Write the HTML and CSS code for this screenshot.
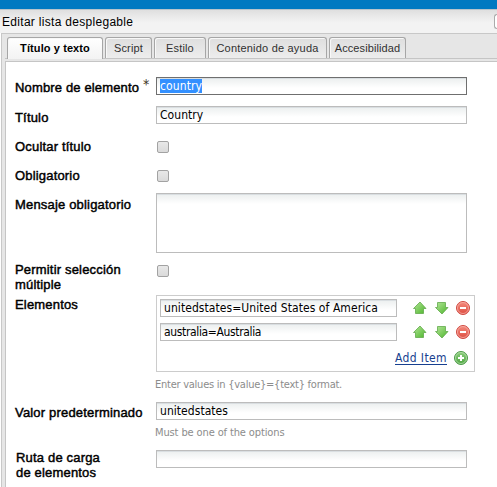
FILE: index.html
```html
<!DOCTYPE html>
<html lang="es">
<head>
<meta charset="utf-8">
<title>Editar lista desplegable</title>
<link rel="stylesheet" href="styles.css">
</head>
<body>
<svg class="defs" width="0" height="0">
  <defs>
    <linearGradient id="green" x1="0" y1="0" x2="1" y2="1"><stop offset="0" stop-color="#b5e69a"/><stop offset="1" stop-color="#4cb52a"/></linearGradient>
    <linearGradient id="disc" x1="0" y1="0" x2="0" y2="1"><stop offset="0" stop-color="#8fcf80"/><stop offset="1" stop-color="#4aa43d"/></linearGradient>
    <linearGradient id="red" x1="0" y1="0" x2="0" y2="1"><stop offset="0" stop-color="#f58d80"/><stop offset="1" stop-color="#dc4a3e"/></linearGradient>
    <symbol id="up" viewBox="0 0 14 14"><path d="M7 1 L13 7.5 H10.5 V12.5 H2.5 V7.5 H.5 Z" fill="url(#green)" stroke="#62a94b" stroke-width=".8"/></symbol>
    <symbol id="down" viewBox="0 0 14 14"><path d="M7 13 L13 6.5 H10.5 V1.5 H2.5 V6.5 H.5 Z" fill="url(#green)" stroke="#62a94b" stroke-width=".8"/></symbol>
    <symbol id="remove" viewBox="0 0 14 14"><circle cx="7" cy="7" r="6.5" fill="url(#red)" stroke="#cf4a42"/><circle cx="7" cy="7" r="5.5" fill="none" stroke="#f6b0a8" stroke-width=".8"/><path d="M4 7H10" stroke="#fff" stroke-width="2"/></symbol>
    <symbol id="add" viewBox="0 0 14 14"><circle cx="7" cy="7" r="6.5" fill="url(#disc)" stroke="#4d9a48"/><circle cx="7" cy="7" r="5.5" fill="none" stroke="#b5deac" stroke-width=".8"/><path d="M4 7H10M7 4V10" stroke="#fff" stroke-width="2"/></symbol>
  </defs>
</svg>
<div class="topbar"></div>
<header class="titlebar"><span class="title">Editar lista desplegable</span><span class="corner"></span></header>
<main class="frame">
  <nav class="tabs">
    <div class="tab active">Título y texto</div>
    <div class="tab script">Script</div>
    <div class="tab style">Estilo</div>
    <div class="tab help">Contenido de ayuda</div>
    <div class="tab access">Accesibilidad</div>
  </nav>
  <section class="form">
    <div class="label name">Nombre de elemento<span class="star">*</span></div>
    <div><div class="input focus"><span class="selected">country</span></div></div>
    <div class="label">Título</div>
    <div><div class="input"><span>Country</span></div></div>
    <div class="label">Ocultar título</div>
    <div><div class="check"></div></div>
    <div class="label">Obligatorio</div>
    <div><div class="check"></div></div>
    <div class="label">Mensaje obligatorio</div>
    <div><div class="input area"></div></div>
    <div class="label high">Permitir selección<br>múltiple</div>
    <div><div class="check"></div></div>
    <div class="label items-label">Elementos</div>
    <div>
      <div class="items">
        <div class="item"><div class="input"><span class="wide">unitedstates=United States of America</span></div><svg><use href="#up"/></svg><svg><use href="#down"/></svg><svg><use href="#remove"/></svg></div>
        <div class="item"><div class="input"><span class="narrow">australia=Australia</span></div><svg><use href="#up"/></svg><svg><use href="#down"/></svg><svg><use href="#remove"/></svg></div>
        <div class="add"><span class="link">Add Item</span><svg><use href="#add"/></svg></div>
      </div>
      <div class="hint format">Enter values in {value}={text} format.</div>
    </div>
    <div class="label high default">Valor predeterminado</div>
    <div><div class="input"><span>unitedstates</span></div><div class="hint options">Must be one of the options</div></div>
    <div class="label path">Ruta de carga<br>de elementos</div>
    <div><div class="input"></div></div>
  </section>
</main>
</body>
</html>
```
FILE: styles.css
```css
* { box-sizing: border-box; }
body {
  margin: 0;
  width: 497px;
  height: 487px;
  overflow: hidden;
  background: #fff;
  font-family: "Liberation Sans", Arial, sans-serif;
  color: #000;
}
.defs { position: absolute; }
.topbar { height: 9px; background: #0079c1; }
.titlebar {
  height: 24px;
  display: flex;
  justify-content: space-between;
  padding-left: 2px;
  border-top: 1px solid #b8c4cc;
  background: linear-gradient(#dfdfdf, #f3f3f3 55%);
  overflow: hidden;
}
.title { font-size: 12px; line-height: 24px; letter-spacing: .3px; white-space: nowrap; }
.corner {
  width: 3px;
  height: 15px;
  margin-top: 4px;
  border: 1px solid #aaa;
  border-right: 0;
  border-radius: 4px 0 0 4px;
  background: #fff;
}
.frame {
  height: 454px;
  margin-left: 1px;
  border-top: 1px solid #c8c8c8;
  border-left: 1px solid #c8c8c8;
  background: #e6e6e6;
  padding-left: 3px;
}
.tabs {
  height: 25px;
  display: flex;
  align-items: flex-end;
  gap: 2px;
  padding-left: 2px;
  border-bottom: 1px solid #c5c5c5;
}
.tab {
  height: 21px;
  border: 1px solid #a6a6a6;
  border-bottom: 0;
  border-radius: 3px 3px 0 0;
  background: linear-gradient(#dedede, #ededed);
  box-shadow: inset 1px 1px #f8f8f8;
  color: #303030;
  font-size: 11px;
  line-height: 21px;
  text-align: center;
  white-space: nowrap;
}
.active {
  width: 96px;
  height: 22px;
  margin-bottom: -1px;
  background: linear-gradient(#fff, #f3f3f3);
  color: #000;
  font-weight: bold;
  letter-spacing: .1px;
}
.script { width: 47px; letter-spacing: .15px; }
.style { width: 52px; letter-spacing: .15px; }
.help { width: 119px; letter-spacing: .2px; }
.access { width: 77px; letter-spacing: .1px; }
.form {
  height: 428px;
  margin-top: 2px;
  border-top: 1px solid #c5c5c5;
  border-left: 1px solid #c5c5c5;
  background: #fff;
  padding: 15px 0 0 9px;
  display: grid;
  grid-template-columns: 141px 320px;
  grid-template-rows: 29px 29px 29px 29px 66px 36px 107px 48px 37px;
}
.label {
  font-size: 13px;
  line-height: 15px;
  padding-top: 4px;
  letter-spacing: .18px;
  white-space: nowrap;
  -webkit-text-stroke: .45px #000;
}
.name { padding-top: 2px; letter-spacing: .15px; }
.high { padding-top: 3px; }
.items-label { padding-top: 2px; }
.path { margin-top: -4px; padding-left: 1px; }
.star {
  display: inline-block;
  height: 10px;
  margin-left: 4px;
  font: 14px "DejaVu Sans Condensed", "DejaVu Sans", sans-serif;
  line-height: 10px;
  vertical-align: 3px;
  color: #3c3020;
  -webkit-text-stroke: 0;
}
.input {
  width: 311px;
  height: 18px;
  padding-left: 3px;
  border: 1px solid #bcbcbc;
  background: linear-gradient(#d9dee1 0, #d9dee1 1px, #edf0f0 1px, #fff 10px);
  font: 12px/17px "DejaVu Sans Condensed", "DejaVu Sans", sans-serif;
  letter-spacing: .05px;
  white-space: nowrap;
}
.input span { display: block; width: max-content; height: 16px; }
.input .wide { letter-spacing: .07px; }
.input .narrow { letter-spacing: -.35px; }
.focus { border-color: #6f6f6f; }
.input .selected { height: 14px; margin-top: 1px; line-height: 14px; letter-spacing: .12px; background: #3390ff; color: #fff; }
.area { height: 60px; }
.check {
  width: 12px;
  height: 12px;
  margin: 6px 0 0 1px;
  border: 1px solid #a2a2a2;
  border-radius: 2px;
  background: linear-gradient(#e8e8e8, #dadada);
}
.items { width: 319px; height: 77px; padding: 3px; border: 1px solid #ccc; }
.item { display: flex; height: 24px; }
.item .input { width: 237px; margin-right: 16px; }
.item svg, .add svg { width: 14px; height: 14px; margin-top: 2px; flex: none; }
.item svg + svg { margin-left: 8px; }
.item svg:last-child { margin-left: 7px; }
.add { display: flex; justify-content: flex-end; padding-right: 3px; }
.link {
  height: 15px;
  margin: 3px 7px 0 0;
  border-bottom: 1px solid #173f8f;
  color: #173f8f;
  font: 12px/17px "DejaVu Sans Condensed", "DejaVu Sans", sans-serif;
  letter-spacing: .4px;
}
.add svg { margin-top: 4px; }
.hint {
  margin-left: -1px;
  color: #8c8c8c;
  font: 11px/14px "DejaVu Sans Condensed", "DejaVu Sans", sans-serif;
  white-space: nowrap;
}
.format { margin-top: 6px; letter-spacing: -.25px; }
.options { margin-top: 6px; letter-spacing: -.12px; }
```
